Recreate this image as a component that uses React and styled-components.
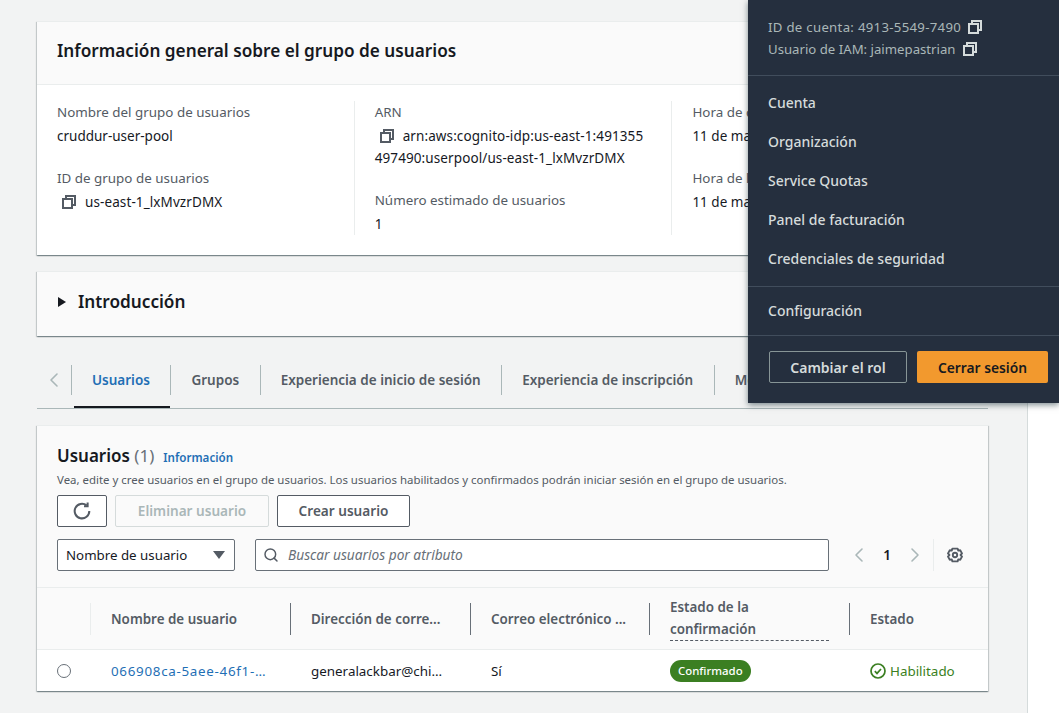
import React from "react";
import styled, { createGlobalStyle } from "styled-components";
import { ChevronLeft, ChevronRight, Search } from "lucide-react";

const GlobalStyle = createGlobalStyle`
  html, body {
    margin: 0;
    padding: 0;
    background: #fff;
  }
  * {
    box-sizing: border-box;
  }
`;

const CopyIcon = ({ color = "#545b64" }) => (
  <svg width="16" height="16" viewBox="0 0 16 16" fill="none" stroke={color} strokeWidth="2">
    <rect x="2" y="5" width="9" height="9" />
    <path d="M5 4V2h9v9h-2" />
  </svg>
);

const RefreshIcon = () => (
  <svg width="18" height="18" viewBox="0 0 16 16" fill="none" stroke="#545b64" strokeWidth="1.8">
    <path d="M14.5 8a6.5 6.5 0 1 1-2.4-5" />
    <path d="M13 .5v3.2H9.8" />
  </svg>
);

const GearIcon = () => (
  <svg width="16" height="16" viewBox="0 0 16 16" fill="none" stroke="#545b64" strokeWidth="1.9">
    <path d="M5.4 1.6h5.2l.6 2 2-.4 1.8 3.2L13.6 8l1.4 1.6-1.8 3.2-2-.4-.6 2H5.4l-.6-2-2 .4L1 9.6 2.4 8 1 6.4l1.8-3.2 2 .4z" strokeLinejoin="round" />
    <circle cx="8" cy="8" r="2.2" />
  </svg>
);

const CheckIcon = () => (
  <svg width="16" height="16" viewBox="0 0 16 16" fill="none" stroke="#3b7f22" strokeWidth="1.7">
    <circle cx="8" cy="8" r="7" />
    <path d="M4.8 8.2l2.2 2.2 4-4.4" />
  </svg>
);

const tableColumns = "53px 200px 180px 179px 200px 1fr";

const App = () => {
  return (
    <Page>
      <GlobalStyle />
      <Main>
        <Card>
          <CardHeader>
            <CardTitle>Información general sobre el grupo de usuarios</CardTitle>
          </CardHeader>
          <Columns>
            <Column>
              <Field>
                <Label>Nombre del grupo de usuarios</Label>
                <Value>cruddur-user-pool</Value>
              </Field>
              <Field>
                <Label>ID de grupo de usuarios</Label>
                <Value $code>
                  <CopyWrap><CopyIcon /></CopyWrap>
                  us-east-1_lxMvzrDMX
                </Value>
              </Field>
            </Column>
            <Column>
              <Field>
                <Label>ARN</Label>
                <Value $code>
                  <CopyWrap><CopyIcon /></CopyWrap>
                  arn:aws:cognito-idp:us-east-1:491355
                  <br />
                  497490:userpool/us-east-1_lxMvzrDMX
                </Value>
              </Field>
              <Field>
                <Label>Número estimado de usuarios</Label>
                <Value>1</Value>
              </Field>
            </Column>
            <Column $last>
              <Field>
                <Label>Hora de creación</Label>
                <Value>11 de marzo de 2023</Value>
              </Field>
              <Field>
                <Label>Hora de la última modificación</Label>
                <Value>11 de marzo de 2023</Value>
              </Field>
            </Column>
          </Columns>
        </Card>

        <Card>
          <Intro>
            <Triangle />
            <IntroTitle>Introducción</IntroTitle>
          </Intro>
        </Card>

        <Tabs>
          <TabArrow>
            <ChevronLeft size={24} strokeWidth={1.6} color="#aab7b8" />
          </TabArrow>
          <Tab $active>Usuarios</Tab>
          <Tab>Grupos</Tab>
          <Tab>Experiencia de inicio de sesión</Tab>
          <Tab>Experiencia de inscripción</Tab>
          <Tab>Mensajería</Tab>
        </Tabs>

        <Card>
          <TableHeader>
            <TitleRow>
              <SectionTitle>
                Usuarios <Count>(1)</Count>
              </SectionTitle>
              <InfoLink>Información</InfoLink>
            </TitleRow>
            <Description>
              Vea, edite y cree usuarios en el grupo de usuarios. Los usuarios habilitados y confirmados podrán iniciar sesión en el grupo de usuarios.
            </Description>
            <Actions>
              <Button $wide="50px"><RefreshIcon /></Button>
              <Button $wide="154px" disabled>Eliminar usuario</Button>
              <Button $wide="133px">Crear usuario</Button>
            </Actions>
            <Filters>
              <SelectBox>
                Nombre de usuario
                <Caret />
              </SelectBox>
              <SearchBox>
                <Search size={16} strokeWidth={2.2} color="#545b64" />
                <SearchText>Buscar usuarios por atributo</SearchText>
              </SearchBox>
              <Pagination>
                <ChevronLeft size={24} strokeWidth={1.6} color="#aab7b8" />
                <PageNumber>1</PageNumber>
                <ChevronRight size={24} strokeWidth={1.6} color="#aab7b8" />
              </Pagination>
              <Settings><GearIcon /></Settings>
            </Filters>
          </TableHeader>
          <HeadRow>
            <span />
            <HeadCell $faint>Nombre de usuario</HeadCell>
            <HeadCell>Dirección de corre...</HeadCell>
            <HeadCell>Correo electrónico ...</HeadCell>
            <HeadCell>
              <Dashed>Estado de la confirmación</Dashed>
            </HeadCell>
            <HeadCell>Estado</HeadCell>
          </HeadRow>
          <BodyRow>
            <RadioCell><Radio /></RadioCell>
            <Cell><UserLink>066908ca-5aee-46f1-…</UserLink></Cell>
            <Cell>generalackbar@chi…</Cell>
            <Cell>Sí</Cell>
            <Cell><Pill>Confirmado</Pill></Cell>
            <Cell>
              <Enabled><CheckIcon />Habilitado</Enabled>
            </Cell>
          </BodyRow>
        </Card>
      </Main>
      <SideStrip />

      <AccountMenu>
        <AccountInfo>
          <AccountLine $spaced>ID de cuenta: 4913-5549-7490 <CopyIcon color="#d5dbdb" /></AccountLine>
          <AccountLine>Usuario de IAM: jaimepastrian <CopyIcon color="#d5dbdb" /></AccountLine>
        </AccountInfo>
        <MenuGroup>
          <MenuItem>Cuenta</MenuItem>
          <MenuItem>Organización</MenuItem>
          <MenuItem>Service Quotas</MenuItem>
          <MenuItem>Panel de facturación</MenuItem>
          <MenuItem>Credenciales de seguridad</MenuItem>
        </MenuGroup>
        <MenuGroup $single>
          <MenuItem>Configuración</MenuItem>
        </MenuGroup>
        <MenuActions>
          <RoleButton>Cambiar el rol</RoleButton>
          <SignOutButton>Cerrar sesión</SignOutButton>
        </MenuActions>
      </AccountMenu>
    </Page>
  );
};

export default App;

const Page = styled.div`
  position: relative;
  display: flex;
  width: 1059px;
  height: 713px;
  overflow: hidden;
  font-family: "Noto Sans", sans-serif;
  font-size: 14px;
  color: #16191f;
`;

const Main = styled.main`
  width: 1028px;
  flex: none;
  display: flex;
  flex-direction: column;
  padding: 21px 39px 0 37px;
  background: #f2f3f3;
  border-right: 1px solid #d5dbdb;
`;

const SideStrip = styled.div`
  flex: 1;
  background: #fff;
`;

const Card = styled.section`
  background: #fff;
  border-top: 1px solid #eaeded;
  box-shadow: 0 1px 1px 0 rgba(0, 28, 36, 0.3), 1px 1px 1px 0 rgba(0, 28, 36, 0.15), -1px 1px 1px 0 rgba(0, 28, 36, 0.15);
  margin-bottom: 16px;
`;

const CardHeader = styled.header`
  height: 63px;
  display: flex;
  align-items: center;
  padding: 0 20px 5px;
  background: #fafafa;
  border-bottom: 1px solid #eaeded;
`;

const CardTitle = styled.h2`
  margin: 0;
  font-size: 17.2px;
  font-weight: 600;
`;

const Columns = styled.div`
  display: flex;
  padding: 16px 0 20px 20px;
  height: 170px;
`;

const Column = styled.div`
  flex: none;
  width: ${({ $last }) => ($last ? "300px" : "297.7px")};
  margin-right: 20px;
  display: flex;
  flex-direction: column;
  gap: 20px;
  border-right: ${({ $last }) => ($last ? "none" : "1px solid #eaeded")};
`;

const Field = styled.div`
  display: flex;
  flex-direction: column;
  gap: 2px;
`;

const Label = styled.div`
  line-height: 22px;
  font-size: 13.4px;
  color: #545b64;
`;

const Value = styled.div`
  line-height: 22px;
  font-size: 13.5px;
  letter-spacing: ${({ $code }) => ($code ? "0.1px" : "0")};
  color: #16191f;
  white-space: nowrap;
`;

const CopyWrap = styled.span`
  display: inline-flex;
  vertical-align: -3px;
  margin: 0 8px 0 4px;
`;

const Intro = styled.div`
  height: 64px;
  display: flex;
  align-items: center;
  padding: 0 21px 5px;
  background: #fafafa;
`;

const Triangle = styled.span`
  width: 0;
  height: 0;
  border-left: 8px solid #16191f;
  border-top: 5px solid transparent;
  border-bottom: 5px solid transparent;
  margin-right: 12px;
`;

const IntroTitle = styled.h3`
  margin: 0;
  font-size: 17.2px;
  font-weight: 600;
`;

const Tabs = styled.nav`
  height: 45px;
  display: flex;
  margin-top: 12px;
  margin-bottom: 16px;
  border-bottom: 1px solid #aab7b8;
  white-space: nowrap;
  overflow: hidden;
`;

const TabArrow = styled.div`
  width: 34px;
  height: 32px;
  display: flex;
  align-items: center;
  justify-content: center;
`;

const Tab = styled.div`
  position: relative;
  height: 44px;
  padding: 1px 20.5px 0 21px;
  font-size: 13.5px;
  line-height: 30px;
  font-weight: 600;
  color: ${({ $active }) => ($active ? "#1f6fb5" : "#545b64")};

  &::before {
    content: "";
    position: absolute;
    left: 0;
    top: 1px;
    height: 30px;
    border-left: 1px solid #aab7b8;
  }

  &::after {
    content: "";
    display: ${({ $active }) => ($active ? "block" : "none")};
    position: absolute;
    left: 3px;
    right: 0;
    bottom: 0;
    height: 2px;
    background: #16191f;
  }
`;

const TableHeader = styled.header`
  height: 162px;
  padding: 17px 20px 0;
  background: #fafafa;
  border-bottom: 1px solid #eaeded;
`;

const TitleRow = styled.div`
  display: flex;
  align-items: baseline;
  gap: 9px;
  height: 25px;
`;

const SectionTitle = styled.h2`
  margin: 0;
  font-size: 17px;
  line-height: 25px;
  font-weight: 600;
`;

const Count = styled.span`
  font-weight: 400;
  color: #687078;
`;

const InfoLink = styled.a`
  font-size: 11.6px;
  font-weight: 600;
  color: #1f6fb5;
`;

const Description = styled.p`
  margin: 0;
  height: 27px;
  font-size: 11.45px;
  line-height: 24px;
  color: #545b64;
  white-space: nowrap;
`;

const Actions = styled.div`
  display: flex;
  gap: 8px;
  margin-bottom: 12px;
`;

const Button = styled.button`
  width: ${({ $wide }) => $wide};
  height: 32px;
  display: flex;
  align-items: center;
  justify-content: center;
  padding: 0 0 1px;
  background: ${({ disabled }) => (disabled ? "#fafafa" : "#fff")};
  border: 1px solid ${({ disabled }) => (disabled ? "#d5dbdb" : "#545b64")};
  border-radius: 2px;
  font-family: inherit;
  font-size: 13.6px;
  font-weight: 600;
  color: ${({ disabled }) => (disabled ? "#aab7b8" : "#545b64")};
`;

const Filters = styled.div`
  display: flex;
  align-items: center;
`;

const SelectBox = styled.div`
  width: 178px;
  height: 32px;
  display: flex;
  align-items: center;
  justify-content: space-between;
  padding: 0 9px 0 8px;
  background: #fff;
  border: 1px solid #687078;
  border-radius: 2px;
  font-size: 13.3px;
`;

const Caret = styled.span`
  width: 0;
  height: 0;
  border-top: 8px solid #545b64;
  border-left: 6px solid transparent;
  border-right: 6px solid transparent;
`;

const SearchBox = styled.div`
  width: 574px;
  height: 32px;
  margin-left: 20px;
  display: flex;
  align-items: center;
  gap: 9px;
  padding: 0 7px;
  background: #fff;
  border: 1px solid #687078;
  border-radius: 2px;
`;

const SearchText = styled.span`
  font-size: 13.7px;
  font-style: italic;
  color: #687078;
  margin-top: -1px;
`;

const Pagination = styled.div`
  width: 104px;
  display: flex;
  align-items: center;
  justify-content: space-between;
  padding-left: 18px;
  padding-right: 6px;
`;

const PageNumber = styled.span`
  font-size: 13.5px;
  font-weight: 600;
`;

const Settings = styled.div`
  height: 32px;
  padding-left: 13px;
  display: flex;
  align-items: center;
  border-left: 1px solid #eaeded;
`;

const HeadRow = styled.div`
  height: 62px;
  display: grid;
  grid-template-columns: ${tableColumns};
  align-items: center;
  background: #fafafa;
  border-bottom: 1px solid #eaeded;
`;

const HeadCell = styled.div`
  min-height: 32px;
  display: flex;
  align-items: center;
  padding: 0 20px;
  border-left: 1px solid ${({ $faint }) => ($faint ? "#eaeded" : "#687078")};
  font-size: 13.4px;
  font-weight: 600;
  color: #545b64;
  white-space: nowrap;
`;

const Dashed = styled.span`
  display: block;
  width: 160px;
  margin: -8px 0;
  white-space: normal;
  line-height: 22px;
  border-bottom: 1px dashed #545b64;
`;

const BodyRow = styled.div`
  height: 41px;
  display: grid;
  grid-template-columns: ${tableColumns};
  align-items: center;
  font-size: 13.4px;
`;

const RadioCell = styled.div`
  padding-left: 20px;
  display: flex;
`;

const Radio = styled.span`
  width: 14px;
  height: 14px;
  border: 1px solid #687078;
  border-radius: 50%;
`;

const Cell = styled.div`
  display: flex;
  align-items: center;
  padding-left: 21px;
  white-space: nowrap;
`;

const UserLink = styled.a`
  color: #1f6fb5;
  letter-spacing: 0.7px;
`;

const Pill = styled.span`
  display: inline-block;
  height: 22px;
  padding: 0 8px;
  border-radius: 11px;
  background: #3b7f22;
  color: #fff;
  font-size: 11.4px;
  font-weight: 500;
  line-height: 22px;
`;

const Enabled = styled.span`
  display: inline-flex;
  align-items: center;
  gap: 4px;
  color: #3b7f22;
`;

const AccountMenu = styled.aside`
  position: absolute;
  top: 0;
  right: 0;
  width: 311px;
  height: 403px;
  background: #252f3e;
  box-shadow: 0 2px 6px rgba(0, 28, 36, 0.5);
  display: flex;
  flex-direction: column;
`;

const AccountInfo = styled.div`
  height: 76px;
  padding: 16px 20px 0;
  border-bottom: 1px solid #414d5c;
`;

const AccountLine = styled.div`
  display: flex;
  align-items: center;
  gap: 6px;
  height: 22px;
  font-size: 13.2px;
  letter-spacing: ${({ $spaced }) => ($spaced ? "0.3px" : "0")};
  color: #aab7b8;
`;

const MenuGroup = styled.div`
  height: ${({ $single }) => ($single ? "49px" : "211px")};
  padding-top: ${({ $single }) => ($single ? "4px" : "7px")};
  border-bottom: 1px solid #414d5c;
`;

const MenuItem = styled.div`
  height: 39px;
  padding: 0 20px 1px;
  display: flex;
  align-items: center;
  font-size: 14px;
  font-weight: 500;
  color: #d5dbdb;
`;

const MenuActions = styled.div`
  display: flex;
  gap: 10px;
  padding: 15px 11px 0 21px;
`;

const RoleButton = styled.button`
  width: 138px;
  height: 32px;
  padding: 0;
  background: transparent;
  border: 1px solid #879596;
  border-radius: 2px;
  font-family: inherit;
  font-size: 14px;
  font-weight: 600;
  color: #d5dbdb;
`;

const SignOutButton = styled.button`
  width: 131px;
  height: 32px;
  padding: 0;
  background: #f2992e;
  border: none;
  border-radius: 2px;
  font-family: inherit;
  font-size: 13.8px;
  font-weight: 600;
  color: #16191f;
`;
